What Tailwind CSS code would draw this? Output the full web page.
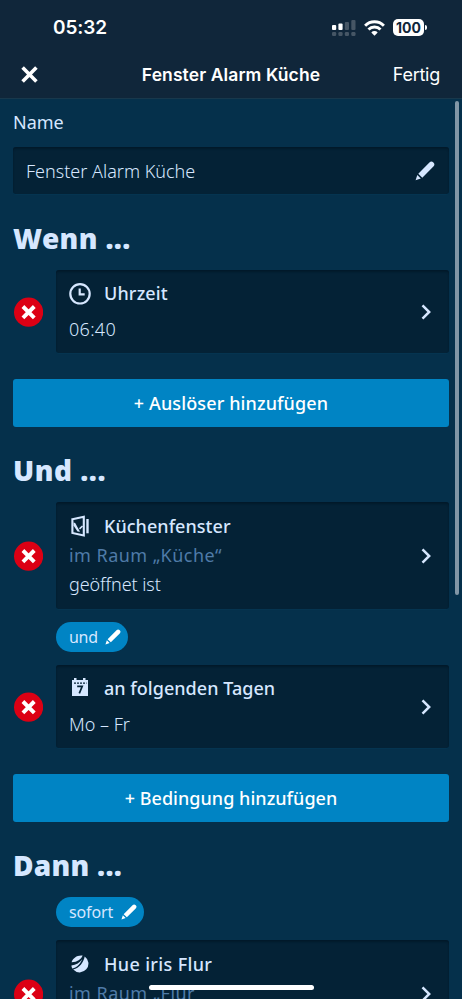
<!DOCTYPE html>
<html lang="de">
<head>
<meta charset="utf-8">
<meta name="viewport" content="width=device-width, initial-scale=1">
<title>Fenster Alarm Küche</title>
<script src="https://cdn.jsdelivr.net/npm/@tailwindcss/browser@4"></script>
</head>
<body class="relative h-[999px] w-[462px] overflow-hidden bg-[#05304b] font-['Noto_Sans',sans-serif] text-[#d6e7ff]">
<svg class="hidden">
  <symbol id="pencil" viewBox="0 0 20 20"><path d="M3.300 12.700 14.400 1.500a2.600 2.600 0 0 1 4 4L7.300 16.700z"/><path d="M2.300 14 5.800 17.500 .600 19.300z"/></symbol>
  <symbol id="chevron" viewBox="0 0 10 16"><path d="M1.500 1.300 8.200 8l-6.700 6.700" fill="none" stroke="currentColor" stroke-width="2.500"/></symbol>
  <symbol id="remove" viewBox="0 0 30 30"><circle cx="15.600" cy="15.200" r="14.600" fill="#dc0014"/><path d="m9.900 9.500 11.400 11.400M21.300 9.500 9.900 20.900" stroke="#fff" stroke-width="3.900"/></symbol>
</svg>

<header class="flex h-[99px] flex-col border-b border-[#18384c] bg-[#10263a] font-['Inter',sans-serif] text-white">
  <div class="flex h-[54px] items-center justify-between pt-px pr-[35px] pl-[53px]">
    <span class="text-[19px] leading-none font-semibold tracking-[-0.1px]">05:32</span>
    <div class="flex items-center gap-2">
      <svg class="h-[18px] w-6" viewBox="0 0 24 18" fill="#fff"><rect x="0" y="6" width="4.2" height="5" rx="1"/><rect x="6.4" y="4.5" width="4.2" height="6.5" rx="1"/><g fill="#465665"><rect x="12.8" y="3" width="4.2" height="8" rx="1"/><rect x="19.3" y="1" width="4.2" height="10" rx="1"/><rect x="0" y="13" width="4.2" height="4" rx="1.2"/><rect x="6.4" y="13" width="4.2" height="4" rx="1.2"/><rect x="12.8" y="13" width="4.2" height="4" rx="1.2"/><rect x="19.3" y="13" width="4.2" height="4" rx="1.2"/></g></svg>
      <svg class="h-[16px] w-[21px]" viewBox="0 0 21 16" fill="none" stroke="#fff" stroke-width="2.9"><path d="M1.1 5.700a13.300 13.300 0 0 1 18.800 0"/><path d="M4.500 9.500a8.300 8.300 0 0 1 12 0"/><path d="M10.500 15.700 7.300 12.400a4.400 4.400 0 0 1 6.400 0z" fill="#fff" stroke="none"/></svg>
      <div class="flex items-center gap-px">
        <span class="flex h-[17px] w-[31px] items-center justify-center rounded-[5px] bg-white text-[14px] leading-none font-bold text-[#10263a]">100</span>
        <span class="h-[5px] w-[2px] rounded-r-full bg-white"></span>
      </div>
    </div>
  </div>
  <div class="grid h-[41px] grid-cols-[100px_1fr_100px] items-center pr-[22px] pl-[21px]">
    <svg class="h-[17px] w-[17px]" viewBox="0 0 17 17" fill="none" stroke="#fff" stroke-width="3.6"><path d="m1.600 1.600 13.800 13.800M15.400 1.600 1.600 15.400"/></svg>
    <h1 class="pl-px text-center text-[17.5px] leading-none font-semibold tracking-[0.1px] whitespace-nowrap">Fenster Alarm Küche</h1>
    <span class="text-right text-[18px] leading-none tracking-[-0.25px]">Fertig</span>
  </div>
</header>

<main class="pr-[13px] pl-[13px]">
  <div class="flex h-12 items-center pb-[2px] text-[18px] leading-none font-[450]">Name</div>
  <div class="flex h-[47px] items-center justify-between rounded-[3px] bg-[#042236] pr-[14px] pl-[13px] shadow-[inset_0_2px_2px_#021a2b,0_1px_0_#053450]">
    <span class="text-[18px] leading-none font-light">Fenster Alarm Küche</span>
    <svg class="h-5 w-5 fill-current"><use href="#pencil"/></svg>
  </div>

  <h2 class="flex h-[76px] items-center pt-[11px] text-[28px] leading-none font-black tracking-[0.35px]">Wenn ...</h2>
  <div class="flex items-center gap-[13px]">
    <svg class="h-[30px] w-[30px] shrink-0"><use href="#remove"/></svg>
    <div class="flex h-[83px] flex-1 items-center justify-between rounded-[3px] bg-[#042236] pr-[18px] pl-[13px] shadow-[inset_0_2px_2px_#021a2b,0_1px_0_#053450]">
      <div>
        <div class="flex h-[35px] items-center">
          <svg class="mr-[13px] h-[22px] w-[22px]" viewBox="0 0 22 22" fill="none" stroke="currentColor" stroke-width="2.200"><circle cx="11" cy="10.800" r="9.700"/><path d="M10.700 5.400v5.900h5"/></svg>
          <span class="pb-[2px] text-[18px] leading-none font-medium tracking-[0.150px]">Uhrzeit</span>
        </div>
        <div class="flex h-[35px] items-center text-[18px] leading-none font-light tracking-[0.300px]">06:40</div>
      </div>
      <svg class="h-4 w-[10px]"><use href="#chevron"/></svg>
    </div>
  </div>
  <button class="mt-[26px] flex h-12 w-full items-center justify-center rounded-[3px] bg-[#0084c4] text-[18px] leading-none font-medium tracking-[0.12px] text-white">+ Auslöser hinzufügen</button>

  <h2 class="flex h-[75px] items-center pt-[11px] text-[28px] leading-none font-black tracking-[0.5px]">Und ...</h2>
  <div class="flex items-center gap-[13px]">
    <svg class="h-[30px] w-[30px] shrink-0"><use href="#remove"/></svg>
    <div class="flex h-[107px] flex-1 items-center justify-between rounded-[3px] bg-[#042236] pr-[18px] pl-[13px] shadow-[inset_0_2px_2px_#021a2b,0_1px_0_#053450]">
      <div class="pb-[2px]">
        <div class="flex h-[29px] items-center">
          <svg class="mr-[13px] h-[22px] w-[22px]" viewBox="0 0 22 22" fill="none" stroke="currentColor" stroke-width="2.100"><path d="M3.400 4.200 14.800 1.700v18.800L3.400 18z"/><path d="M18.500 4v14.300" stroke-width="2.400"/><path d="M4.500 7.500 6.200 8 11 16.800 8.500 16.500 4.500 10.500z" fill="currentColor" stroke="none"/><path d="M10.500 13.800 13.500 11" stroke-width="1.600"/></svg>
          <span class="text-[18px] leading-none font-medium tracking-[0.040px]">Küchenfenster</span>
        </div>
        <div class="flex h-[29px] items-center text-[18px] leading-none tracking-[0.450px] text-[#4f7ba8]">im Raum „Küche“</div>
        <div class="flex h-[29px] items-center text-[18px] leading-none font-light tracking-[-0.080px]">geöffnet ist</div>
      </div>
      <svg class="h-4 w-[10px]"><use href="#chevron"/></svg>
    </div>
  </div>
  <div class="mt-[13px] ml-[43px] flex h-[30px] w-[72px] items-center justify-between rounded-full bg-[#0084c4] pr-[7px] pl-[13px] text-[16px] leading-none">
    <span class="tracking-[-0.300px]">und</span><svg class="h-4 w-4 fill-white"><use href="#pencil"/></svg>
  </div>
  <div class="mt-[13px] flex items-center gap-[13px]">
    <svg class="h-[30px] w-[30px] shrink-0"><use href="#remove"/></svg>
    <div class="flex h-[83px] flex-1 items-center justify-between rounded-[3px] bg-[#042236] pr-[18px] pl-[13px] shadow-[inset_0_2px_2px_#021a2b,0_1px_0_#053450]">
      <div>
        <div class="flex h-[35px] items-center">
          <svg class="mr-[13px] h-[22px] w-[22px]" viewBox="0 0 22 22"><path d="M3 2h2V.100h2.500V2h6.500V.100h2.500V2H19v16H3z" fill="currentColor"/><path d="M5 5.200h12.500" stroke="#042236" stroke-width="1.200" stroke-dasharray="2 1"/><path d="M8.200 8.400h5l-2.900 6.900" fill="none" stroke="#042236" stroke-width="1.700"/></svg>
          <span class="pb-[2px] text-[18px] leading-none font-medium tracking-[0.030px]">an folgenden Tagen</span>
        </div>
        <div class="flex h-[35px] items-center text-[18px] leading-none font-light">Mo – Fr</div>
      </div>
      <svg class="h-4 w-[10px]"><use href="#chevron"/></svg>
    </div>
  </div>
  <button class="mt-[26px] flex h-12 w-full items-center justify-center rounded-[3px] bg-[#0084c4] text-[18px] leading-none font-medium tracking-[0.040px] text-white">+ Bedingung hinzufügen</button>

  <h2 class="flex h-[75px] items-center pt-[11px] text-[28px] leading-none font-black tracking-[0.25px]">Dann ...</h2>
  <div class="ml-[43px] flex h-[30px] w-[88px] items-center justify-between rounded-full bg-[#0084c4] pr-[7px] pl-[13px] text-[16px] leading-none">
    <span class="tracking-[-0.150px]">sofort</span><svg class="h-4 w-4 fill-white"><use href="#pencil"/></svg>
  </div>
  <div class="mt-[13px] flex items-center gap-[13px]">
    <svg class="h-[30px] w-[30px] shrink-0"><use href="#remove"/></svg>
    <div class="flex h-[107px] flex-1 items-center justify-between rounded-[3px] bg-[#042236] pr-[18px] pl-[13px] shadow-[inset_0_2px_2px_#021a2b,0_1px_0_#053450]">
      <div class="h-[89px]">
        <div class="flex h-[29px] items-center">
          <svg class="mr-[13px] h-[22px] w-[22px] fill-current" viewBox="0 0 22 22"><path d="M2.600 9.200C3.800 4.800 8.500 1.800 13.600 2.500 12 6.500 8 9.300 2.600 9.200z"/><path d="M2.400 12.600C7 12 11 9.500 13.200 6.300 11.500 10.500 8.500 14.300 3.200 15.600 2.700 14.700 2.500 13.700 2.400 12.600z"/><path d="M4.200 16.600C10.500 14.600 14.500 9.500 15.700 3.400A8.800 8.800 0 1 1 4.200 16.600z"/></svg>
          <span class="text-[18px] leading-none font-medium tracking-[0.350px]">Hue iris Flur</span>
        </div>
        <div class="flex h-[29px] items-center text-[18px] leading-none tracking-[0.450px] text-[#4f7ba8]">im Raum „Flur</div>
      </div>
      <svg class="h-4 w-[10px]"><use href="#chevron"/></svg>
    </div>
  </div>
</main>

<div class="absolute top-[101px] right-[3px] h-[494px] w-1 rounded-full bg-[#8196a6]"></div>
<div class="absolute top-[985px] left-[149px] h-[5px] w-[165px] rounded-full bg-white"></div>
</body>
</html>
